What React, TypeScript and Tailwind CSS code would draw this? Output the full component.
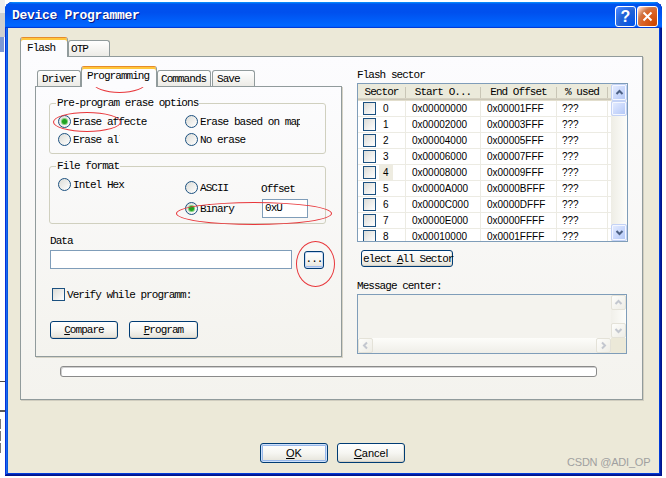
import React from "react";

const M = "font-['Liberation_Mono',monospace] text-[11px] leading-[12px] tracking-[-0.95px] text-black";
const S = "font-['Liberation_Sans',Arial,sans-serif]";
const BTN =
  "flex items-center justify-center rounded-[3px] border border-[#003C74] bg-linear-to-b from-white via-[#F6F6F2] to-[#E4E2D8] shadow-[inset_0_-1px_0_#D6D0C5,inset_-1px_0_0_#E3E1D6]";
const TAB =
  "flex items-center border border-b-0 border-[#919B9C] rounded-t-[3px] bg-linear-to-b from-white to-[#ECEBE6]";
const TABSEL =
  "relative z-10 -mb-px flex items-center border border-b-0 border-[#919B9C] border-t-[#E68B2C] rounded-t-[3px] bg-[#FCFCFE] shadow-[inset_0_2px_0_#FFC73C]";
const SBA =
  "flex shrink-0 items-center justify-center rounded-[2px] border border-[#C3D2F6] bg-linear-to-br from-[#E6EDFE] via-[#CBD9FC] to-[#B1C6F5] shadow-[inset_0_0_0_1px_#F4F7FF]";
const SBD =
  "flex shrink-0 items-center justify-center rounded-[2px] border border-[#E4E2D8] bg-linear-to-br from-[#FDFDFB] to-[#EEEDE6]";

const UP = "M1.5 6 L4.5 3 L7.5 6";
const DOWN = "M1.5 3 L4.5 6 L7.5 3";
const LEFT = "M6 1.5 L3 4.5 L6 7.5";
const RIGHT = "M3 1.5 L6 4.5 L3 7.5";

function Chev({ d, c }: { d: string; c: string }) {
  return (
    <svg width="9" height="9" viewBox="0 0 9 9" className="block">
      <path d={d} fill="none" stroke={c} strokeWidth="2" />
    </svg>
  );
}

function Radio({ checked = false }: { checked?: boolean }) {
  return (
    <span className="flex h-[13px] w-[13px] shrink-0 items-center justify-center rounded-full border border-[#1C5180] bg-linear-to-br from-[#DCDCD7] to-white">
      {checked ? <span className="h-[5px] w-[5px] rounded-full bg-[#21A121] shadow-[0_0_0_1px_#7ED27E]" /> : null}
    </span>
  );
}

function RadioItem({ label, checked = false, w }: { label: string; checked?: boolean; w: string }) {
  return (
    <div className="flex h-[13px] items-center">
      <Radio checked={checked} />
      <span className={`${M} ml-[2px] overflow-hidden whitespace-nowrap ${w}`}>{label}</span>
    </div>
  );
}

function Check() {
  return <span className="block h-[13px] w-[13px] shrink-0 border border-[#1C5180] bg-linear-to-br from-[#DCDCD7] to-white" />;
}

const sectors: [string, string, string][] = [
  ["0", "0x00000000", "0x00001FFF"],
  ["1", "0x00002000", "0x00003FFF"],
  ["2", "0x00004000", "0x00005FFF"],
  ["3", "0x00006000", "0x00007FFF"],
  ["4", "0x00008000", "0x00009FFF"],
  ["5", "0x0000A000", "0x0000BFFF"],
  ["6", "0x0000C000", "0x0000DFFF"],
  ["7", "0x0000E000", "0x0000FFFF"],
  ["8", "0x00010000", "0x0001FFFF"],
];

function HeadDiv() {
  return <span className="h-[11px] w-px shrink-0 self-center bg-[#C9C6B6]" />;
}

function SectorList() {
  return (
    <div className="flex h-[159px] w-[271px] border border-[#7F9DB9] bg-white">
      <div className="flex w-[253px] flex-col overflow-hidden">
        <div className="flex h-[17px] shrink-0 bg-[#EBEADB] pb-[1px] shadow-[inset_0_-1px_0_#E2DECD,inset_0_-2px_0_#CBC7B8,inset_0_-3px_0_#D6D2C2]">
          <span className={`${M} flex w-[47px] items-center justify-center`}>Sector</span>
          <HeadDiv />
          <span className={`${M} flex w-[74px] items-center justify-center`}>Start O...</span>
          <HeadDiv />
          <span className={`${M} flex w-[75px] items-center justify-center`}>End Offset</span>
          <HeadDiv />
          <span className={`${M} flex w-[50px] items-center justify-center`}>% used</span>
          <HeadDiv />
        </div>
        {sectors.map(([n, s, e]) => (
          <div key={n} className={`${S} flex h-[16px] shrink-0 text-[10px] leading-[15px] text-black`}>
            <div className="flex w-[48px] items-center border-r border-b border-[#ECEBE3] pl-[5px]">
              <Check />
              <span className={`ml-[3px] h-[15px] w-[14px] px-[4px] ${n === "4" ? "bg-[#EEECE1]" : ""}`}>{n}</span>
            </div>
            <div className="w-[75px] border-r border-b border-[#ECEBE3] pl-[6px]">{s}</div>
            <div className="w-[76px] border-r border-b border-[#ECEBE3] pl-[6px]">{e}</div>
            <div className="w-[51px] border-r border-b border-[#ECEBE3] pl-[5px]">???</div>
            <div className="flex-1 border-b border-[#ECEBE3]" />
          </div>
        ))}
      </div>
      <div className="flex w-[16px] flex-col bg-linear-to-r from-[#EEEDE5] to-[#FDFDFA]">
        <div className={`${SBA} h-[17px]`}>
          <Chev d={UP} c="#4D6185" />
        </div>
        <div className={`${SBA} h-[15px]`} />
        <div className="flex-1" />
        <div className={`${SBA} h-[17px]`}>
          <Chev d={DOWN} c="#4D6185" />
        </div>
      </div>
    </div>
  );
}

function MessageBox() {
  return (
    <div className="flex h-[60px] w-[270px] flex-col border border-[#7F9DB9] bg-[#F4F3EE]">
      <div className="flex flex-1">
        <div className="flex-1" />
        <div className="flex w-[15px] flex-col bg-linear-to-r from-[#F1F0EA] to-[#FDFDFA]">
          <div className={`${SBD} h-[15px]`}>
            <Chev d={UP} c="#C3C7CF" />
          </div>
          <div className="flex-1" />
          <div className={`${SBD} h-[15px]`}>
            <Chev d={DOWN} c="#C3C7CF" />
          </div>
        </div>
      </div>
      <div className="flex h-[15px]">
        <div className="flex flex-1 bg-linear-to-b from-[#FDFDFA] to-[#EFEEE8]">
          <div className={`${SBD} w-[15px]`}>
            <Chev d={LEFT} c="#C3C7CF" />
          </div>
          <div className="flex-1" />
          <div className={`${SBD} w-[15px]`}>
            <Chev d={RIGHT} c="#C3C7CF" />
          </div>
        </div>
        <div className="w-[15px] bg-[#ECE9D8]" />
      </div>
    </div>
  );
}

function ProgrammingPanel() {
  return (
    <div className="flex h-[271px] w-[307px] flex-col border border-[#919B9C] bg-linear-to-b from-[#FCFCFE] to-[#F4F3EE] pl-[13px] shadow-[1px_1px_0_#D6D3C6]">
      <fieldset className="mt-[10px] h-[57px] w-[277px] min-w-0 rounded-[3px] border border-[#D0D0BF] px-[8px]">
        <legend className={`${M} -ml-[2px] px-[1px] text-[#0046D5]`}>Pre-program erase options</legend>
        <div className="mt-[6px] grid grid-cols-[127px_1fr] gap-y-[5px]">
          <RadioItem label="Erase affecte" checked w="w-[75px]" />
          <RadioItem label="Erase based on map" w="w-[100px]" />
          <RadioItem label="Erase all" w="w-[47px]" />
          <RadioItem label="No erase" w="w-[80px]" />
        </div>
      </fieldset>
      <fieldset className="mt-[6px] h-[64px] w-[277px] min-w-0 rounded-[3px] border border-[#D0D0BF] px-[8px]">
        <legend className={`${M} -ml-[2px] px-[1px] text-[#0046D5]`}>File format</legend>
        <div className="flex">
          <div className="mt-[6px] w-[127px]">
            <RadioItem label="Intel Hex" w="w-[60px]" />
          </div>
          <div className="mt-[9px] flex flex-col">
            <div className="flex h-[13px] items-start">
              <div className="w-[76px]">
                <RadioItem label="ASCII" w="w-[40px]" />
              </div>
              <span className={`${M} mt-[2px]`}>Offset</span>
            </div>
            <div className="mt-[5px] flex h-[19px] items-center">
              <div className="w-[77px]">
                <RadioItem label="Binary" checked w="w-[45px]" />
              </div>
              <div className={`${M} h-[19px] w-[46px] border border-[#7F9DB9] bg-white pl-[2px] pt-[2px]`}>0xU</div>
            </div>
          </div>
        </div>
      </fieldset>
      <span className={`${M} ml-[1px] mt-[11px]`}>Data</span>
      <div className="ml-[1px] mt-[3px] flex">
        <div className="h-[19px] w-[242px] border border-[#7F9DB9] bg-white" />
        <div className={`${BTN} ml-[12px] mt-[1px] h-[18px] w-[20px] shadow-[inset_0_0_0_1px_#C9DAF5,inset_0_-2px_0_#9DB9EB]`}>
          <span className={`${M} -mt-[3px]`}>...</span>
        </div>
      </div>
      <div className="ml-[3px] mt-[19px] flex items-center">
        <Check />
        <span className={`${M} ml-[2px]`}>Verify while programm:</span>
      </div>
      <div className="ml-[1px] mt-[20px] flex">
        <div className={`${BTN} h-[18px] w-[68px]`}>
          <span className={M}>
            <span className="underline underline-offset-[1px]">C</span>ompare
          </span>
        </div>
        <div className={`${BTN} ml-[11px] h-[18px] w-[69px]`}>
          <span className={M}>
            <span className="underline underline-offset-[1px]">P</span>rogram
          </span>
        </div>
      </div>
    </div>
  );
}

function FlashPage() {
  return (
    <div className="h-[344px] w-[623px] border border-[#919B9C] bg-linear-to-b from-[#FCFCFE] to-[#F4F3EE] shadow-[1px_1px_0_#D0CDBF]">
      <div className="flex">
        <div className="ml-[14px] mt-[9px] flex w-[307px] flex-col">
          <div className="flex h-[20px] items-end pl-[2px]">
            <div className={`${TAB} h-[16px] w-[44px] pl-[4px]`}>
              <span className={M}>Driver</span>
            </div>
            <div className={`${TABSEL} h-[21px] w-[76px] pl-[5px] pb-[3px]`}>
              <span className={M}>Programming</span>
            </div>
            <div className={`${TAB} h-[16px] w-[54px] pl-[3px]`}>
              <span className={M}>Commands</span>
            </div>
            <div className={`${TAB} ml-[1px] h-[16px] w-[43px] pl-[4px]`}>
              <span className={M}>Save</span>
            </div>
          </div>
          <ProgrammingPanel />
        </div>
        <div className="ml-[15px] flex flex-col pt-[12px]">
          <span className={M}>Flash sector</span>
          <div className="mt-[2px]">
            <SectorList />
          </div>
          <div className={`${BTN} ml-[4px] mt-[8px] h-[17px] w-[92px] justify-start pl-[1px]`}>
            <span className={`${M} whitespace-nowrap`}>
              elect <span className="underline underline-offset-[1px]">A</span>ll Sector
            </span>
          </div>
          <span className={`${M} mt-[13px]`}>Message center:</span>
          <div className="mt-[2px]">
            <MessageBox />
          </div>
        </div>
      </div>
      <div className="ml-[39px] mt-[9px] h-[11px] w-[537px] rounded-[3px] border border-[#8A8A8A] bg-white shadow-[inset_1px_1px_0_#CFCFCF]" />
    </div>
  );
}

function Window() {
  return (
    <div className="flex h-[474px] w-[657px] flex-col overflow-hidden rounded-t-[8px] bg-[#0831D9] shadow-[inset_-1px_-1px_#00138c,inset_1px_1px_#0831d9,inset_-2px_-2px_#001ea0,inset_2px_2px_#166aee,inset_-3px_-3px_#003bda,inset_3px_3px_#0855dd]">
      <div className="flex h-[26px] shrink-0 items-center bg-[linear-gradient(180deg,#0997ff,#0053ee_8%,#0050ee_40%,#06f_88%,#06f_93%,#005bff_95%,#003dd7_96%,#003dd7)] pl-[7px] pr-[4px]">
        <span className="mt-[2px] font-['Liberation_Mono',monospace] text-[13px] font-bold leading-[14px] tracking-[-0.3px] text-white [text-shadow:1px_1px_0_#0A1883]">
          Device Programmer
        </span>
        <div className="ml-auto mt-[3px] flex gap-[1px]">
          <div className="flex h-[21px] w-[21px] items-center justify-center rounded-[3px] border border-white bg-[radial-gradient(circle_at_90%_90%,#0054e9_0%,#2263d5_55%,#4483ff_90%,#ffffff_100%)]">
            <span className={`${S} text-[16px] font-bold leading-[16px] text-white`}>?</span>
          </div>
          <div className="flex h-[21px] w-[21px] items-center justify-center rounded-[3px] border border-white bg-[radial-gradient(circle_at_90%_90%,#cc4600_0%,#dc6527_55%,#cd7546_68%,#ffccb2_90%,#ffffff_100%)]">
            <svg width="13" height="13" viewBox="0 0 13 13">
              <path d="M2.5 2.5 L10.5 10.5 M10.5 2.5 L2.5 10.5" stroke="#fff" strokeWidth="2" />
            </svg>
          </div>
        </div>
      </div>
      <div className="mx-[3px] mb-[3px] flex flex-1 flex-col bg-[#ECE9D8]">
        <div className="ml-[12px] mt-[9px] flex h-[19px] items-end">
          <div className={`${TABSEL} h-[20px] w-[48px] pl-[6px] pt-[1px]`}>
            <span className={M}>Flash</span>
          </div>
          <div className={`${TAB} h-[16px] w-[42px] pl-[2px] pt-[1px]`}>
            <span className={M}>OTP</span>
          </div>
        </div>
        <div className="ml-[12px]">
          <FlashPage />
        </div>
        <div className="mt-[43px] flex gap-[9px] pl-[252px]">
          <div className={`${BTN} h-[20px] w-[68px] shadow-[inset_0_0_0_1px_#CEE0FA,inset_0_0_0_2px_#98B8EA,inset_0_-2px_0_#6B92D9]`}>
            <span className={`${S} text-[11px] leading-[12px] text-black`}>
              <span className="underline underline-offset-[1px]">O</span>K
            </span>
          </div>
          <div className={`${BTN} h-[20px] w-[68px]`}>
            <span className={`${S} text-[11px] leading-[12px] text-black`}>
              <span className="underline underline-offset-[1px]">C</span>ancel
            </span>
          </div>
        </div>
      </div>
    </div>
  );
}

export default function App() {
  return (
    <div className="relative h-[478px] w-[666px] overflow-hidden bg-white">
      <div className="absolute left-0 top-0 h-[13px] w-[5px] bg-[#EDEDED]" />
      <div className="absolute left-0 top-[13px] h-[24px] w-[5px] bg-[#CFCFCF]" />
      <div className="absolute left-0 top-[37px] h-[15px] w-[4px] bg-[#7D98D4]" />
      <div className="absolute left-0 top-[381px] h-px w-[5px] bg-[#4A4A4A]" />
      <div className="absolute left-0 top-[410px] h-[2px] w-[5px] bg-[#5A5A5A]" />
      <div className="absolute left-0 top-[419px] h-[10px] w-px bg-[#777]" />
      <div className="absolute left-0 top-[431px] h-[10px] w-px bg-[#777]" />
      <div className="absolute left-0 top-[443px] h-[10px] w-px bg-[#777]" />
      <div className="pl-[5px] pt-[2px]">
        <Window />
      </div>
      <div className="pointer-events-none absolute left-[93px] top-[73px] h-[20px] w-[53px] rounded-[50%] border border-[#E8363A]" />
      <div className="pointer-events-none absolute left-[53px] top-[112px] h-[20px] w-[68px] rounded-[50%] border border-[#E8363A]" />
      <div className="pointer-events-none absolute left-[176px] top-[202px] h-[23px] w-[156px] rounded-[50%] border border-[#E8363A]" />
      <div className="pointer-events-none absolute left-[296px] top-[241px] h-[46px] w-[39px] rounded-[50%] border border-[#E8363A]" />
      <span className={`${S} absolute left-[567px] top-[456px] text-[11px] leading-[13px] tracking-[-0.2px] text-[#A0A0A0]`}>CSDN @ADI_OP</span>
    </div>
  );
}
